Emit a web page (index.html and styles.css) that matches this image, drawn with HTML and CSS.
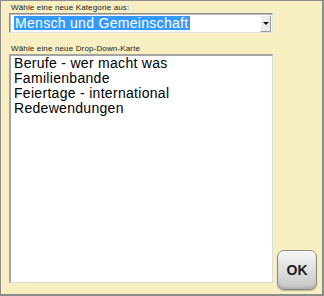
FILE: index.html
```html
<!DOCTYPE html>
<html lang="de">
<head>
  <meta charset="UTF-8">
  <meta name="viewport" content="width=device-width, initial-scale=1.0">
  <title>Drop-Down-Karte wählen</title>
  <link rel="stylesheet" href="styles.css">
</head>
<body>
  <div class="dialog">
    <label class="caption">Wähle eine neue Kategorie aus:</label>
    <div class="combo">
      <span class="combo-value">Mensch und Gemeinschaft</span>
      <span class="combo-button"><span class="arrow"></span></span>
    </div>

    <label class="caption caption-list">Wähle eine neue Drop-Down-Karte</label>
    <ul class="card-list">
      <li>Berufe - wer macht was</li>
      <li>Familienbande</li>
      <li>Feiertage - international</li>
      <li>Redewendungen</li>
    </ul>
    <button class="ok-button">OK</button>
  </div>
</body>
</html>
```

FILE: styles.css
```css
:root {
  --paper: #f7efc1;
  --frame: #8c8c8c;
  --bevel-dark: #8f8f8f;
  --bevel-light: #e4e4e4;
  --highlight: #3399ff;
}

html, body {
  margin: 0;
  padding: 0;
}

body {
  font-family: 'Liberation Sans Narrow', 'Liberation Sans', Arial, sans-serif;
  color: #000;
}

.dialog {
  box-sizing: border-box;
  width: 324px;
  height: 296px;
  background-color: var(--paper);
  border-top: 1px solid var(--frame);
  border-left: 1px solid var(--frame);
  border-right: 2px solid var(--frame);
  border-bottom: 2px solid var(--frame);
  padding: 2px 4px 4px 8px;
  display: grid;
  grid-template-columns: 264px 40px;
  grid-template-rows: auto auto auto 1fr;
  column-gap: 4px;
}

.caption {
  grid-column: 1;
  display: block;
  font-size: 8px;
  line-height: 10px;
  letter-spacing: 0.15px;
  padding-left: 2px;
  color: #222;
}

.caption-list {
  margin-top: 11px;
}

/* combo box */
.combo {
  grid-column: 1;
  box-sizing: border-box;
  height: 20px;
  background: #fff;
  border-top: 1px solid var(--bevel-dark);
  border-left: 1px solid var(--bevel-dark);
  border-right: 1px solid var(--bevel-light);
  border-bottom: 1px solid var(--bevel-light);
  box-shadow: inset 1px 1px 0 #b9b9b9;
  display: flex;
  align-items: center;
  padding: 0 1px 0 4px;
}

.combo-value {
  flex: 1;
}

.combo-value {
  flex: 0 0 auto;
  background-color: var(--highlight);
  color: #fff;
  font-size: 14px;
  line-height: 14px;
  letter-spacing: 0.3px;
  padding: 0 2px 0 1px;
  margin-right: auto;
}

.combo-button {
  box-sizing: border-box;
  width: 11px;
  height: 17px;
  background: #ececec;
  border-top: 1px solid #fff;
  border-left: 1px solid #fff;
  border-right: 1px solid #9a9a9a;
  border-bottom: 1px solid #9a9a9a;
  display: flex;
  align-items: center;
  justify-content: center;
}

.arrow {
  width: 0;
  height: 0;
  border-left: 3px solid transparent;
  border-right: 3px solid transparent;
  border-top: 3px solid #111;
}

/* list box */
.card-list {
  grid-column: 1;
  align-self: start;
  box-sizing: border-box;
  height: 229px;
  margin: 0;
  padding: 0 2px 0 3px;
  list-style: none;
  background: #fff;
  border-top: 2px solid #a3a3a3;
  border-left: 2px solid #a3a3a3;
  border-right: 1px solid #dcdcdc;
  border-bottom: 1px solid #dcdcdc;
  font-size: 14px;
  line-height: 15px;
  letter-spacing: 0.3px;
}

.card-list li {
  white-space: nowrap;
}

.ok-button {
  grid-column: 2;
  grid-row: 4;
  align-self: end;
  width: 40px;
  height: 40px;
  padding: 0;
  border: 1px solid #8a8a8a;
  border-radius: 7px;
  background: linear-gradient(#f6f6f6, #dcdcdc 55%, #c6c6c6);
  box-shadow: inset 0 1px 0 #fff, inset 0 -2px 2px rgba(0, 0, 0, 0.12), 0 1px 1px rgba(0, 0, 0, 0.25);
  font-family: 'Liberation Sans Narrow', 'Liberation Sans', Arial, sans-serif;
  font-weight: bold;
  font-size: 14px;
  color: #1e1e1e;
  cursor: pointer;
}
```
